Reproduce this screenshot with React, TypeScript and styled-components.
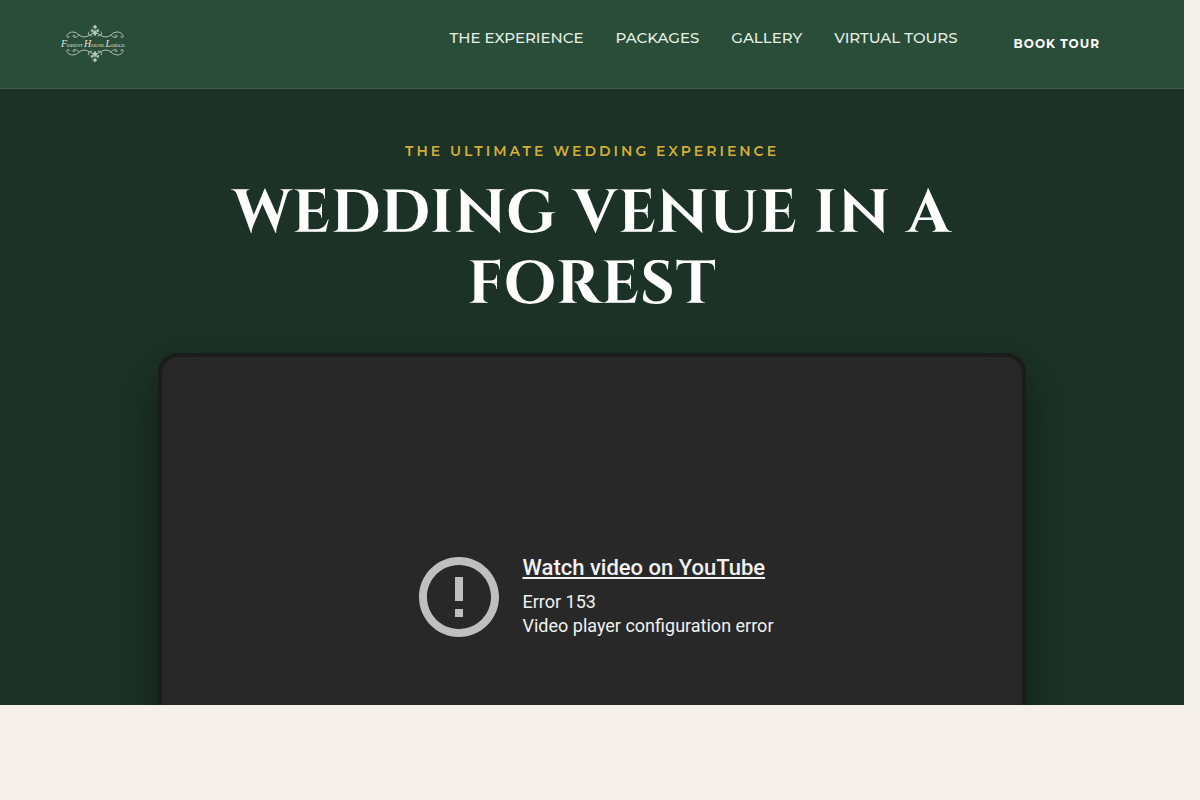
import React from "react";
import styled, { createGlobalStyle } from "styled-components";

const sans = `Montserrat, Inter, "Open Sans", sans-serif`;
const serif = `Cinzel, "Liberation Serif", serif`;

const GlobalStyle = createGlobalStyle`
  * { box-sizing: border-box; }
  body {
    margin: 0;
    background: #f5f0ea;
    font-family: ${sans};
  }
`;

const Page = styled.div`
  margin-right: 16px;
`;

const Header = styled.header`
  display: flex;
  align-items: center;
  justify-content: space-between;
  min-height: 89px;
  padding: 0 60px 0 59px;
  background: #2a4d3a;
  border-bottom: 1px solid #47604e;
`;

const LogoLink = styled.a`
  display: block;
  line-height: 0;
`;

const Nav = styled.nav`
  display: flex;
  align-items: center;
  gap: 32px;
`;

const NavLink = styled.a`
  padding-bottom: 12px;
  color: #e4f0e4;
  font-size: 15px;
  font-weight: 500;
  line-height: 20px;
  text-decoration: none;
  text-transform: uppercase;
`;

const BookButton = styled.button`
  padding: 12px 24px;
  border: 0;
  border-radius: 30px;
  background: transparent;
  color: #fff;
  font-family: ${sans};
  font-size: 12px;
  font-weight: 700;
  line-height: 20px;
  letter-spacing: 1px;
  text-transform: uppercase;
  cursor: pointer;
`;

const Hero = styled.section`
  display: flex;
  flex-direction: column;
  align-items: center;
  height: calc(100vh - 184px);
  padding: 52px 24px 0;
  overflow: hidden;
  background: #1c3226;
`;

const Eyebrow = styled.p`
  margin: 0;
  color: #d4af37;
  font-size: 14px;
  font-weight: 600;
  line-height: 20px;
  letter-spacing: 3px;
  text-transform: uppercase;
`;

const Title = styled.h1`
  max-width: 800px;
  margin: 17px 0 33px;
  color: #fff;
  font-family: ${serif};
  font-size: 60px;
  font-weight: 700;
  line-height: 71px;
  letter-spacing: 1px;
  text-align: center;
  text-transform: uppercase;
`;

const Player = styled.div`
  display: flex;
  flex-shrink: 0;
  align-items: center;
  justify-content: center;
  gap: 16px;
  width: 100%;
  max-width: 868px;
  aspect-ratio: 16 / 9;
  border: 4px solid #1b1c1b;
  border-radius: 20px;
  background: #282828;
  box-shadow: 0 20px 50px rgba(0, 0, 0, 0.4);
  color: #f1f1f1;
  font-family: Roboto, sans-serif;
`;

const Message = styled.div`
  font-size: 18px;
  line-height: 24px;
`;

const WatchLink = styled.a`
  display: block;
  margin-bottom: 10px;
  color: inherit;
  font-size: 22px;
  font-weight: 500;
`;

const MessageLine = styled.p`
  margin: 0;
`;

const flourish = (
  <>
    <path d="M35 9c-3 0-5 4-10 4S19 8 14 8c-4 0-7 3-6 5 1 1 3 0 2-1" />
    <path d="M20 11c-2 3-6 3-6 1 0-1 2-1 2 0" />
    <path d="M33 12c-3 0-5-3-3-4" />
  </>
);

const halfOrnament = (
  <>
    {flourish}
    <g transform="translate(72 0) scale(-1 1)">{flourish}</g>
    <path d="M36 1l2 2-2 2-2-2zM33 5l2 2-2 1-1-1zM39 5l1 2-1 1-2-1zM36 6l2 3-2 3-2-3z" fill="#b9cabb" strokeWidth="0.4" />
  </>
);

function Logo() {
  return (
    <svg width="72" height="40" viewBox="0 0 72 40" role="img" aria-label="Forest House Lodge">
      <g fill="none" stroke="#b9cabb" strokeWidth="0.9" strokeLinecap="round">
        {halfOrnament}
        <g transform="translate(0 39) scale(1 -1)">{halfOrnament}</g>
      </g>
      <text
        x="34"
        y="23"
        fill="#dfe8de"
        fontFamily="'Liberation Serif', serif"
        fontSize="5"
        textAnchor="middle"
      >
        <tspan fontSize="10" fontStyle="italic">F</tspan>OREST{" "}
        <tspan fontSize="10" fontStyle="italic">H</tspan>OUSE{" "}
        <tspan fontSize="10" fontStyle="italic">L</tspan>ODGE
      </text>
    </svg>
  );
}

function ErrorIcon() {
  return (
    <svg width="96" height="96" viewBox="0 0 24 24" fill="#bfbfbf" aria-hidden="true">
      <path d="M11 15h2v2h-2zm0-8h2v6h-2zm.99-5C6.47 2 2 6.48 2 12s4.47 10 9.99 10C17.52 22 22 17.52 22 12S17.52 2 11.99 2zM12 20c-4.42 0-8-3.58-8-8s3.58-8 8-8 8 3.58 8 8-3.58 8-8 8z" />
    </svg>
  );
}

const links = ["The Experience", "Packages", "Gallery", "Virtual Tours"];

export default function App() {
  return (
    <>
      <GlobalStyle />
      <Page>
        <Header>
          <LogoLink href="#home">
            <Logo />
          </LogoLink>
          <Nav>
            {links.map((label) => (
              <NavLink key={label} href={`#${label.toLowerCase().replace(" ", "-")}`}>
                {label}
              </NavLink>
            ))}
            <BookButton type="button">Book Tour</BookButton>
          </Nav>
        </Header>
        <main>
          <Hero>
            <Eyebrow>The Ultimate Wedding Experience</Eyebrow>
            <Title>Wedding Venue in a Forest</Title>
            <Player>
              <ErrorIcon />
              <Message>
                <WatchLink href="#watch">Watch video on YouTube</WatchLink>
                <MessageLine>Error 153</MessageLine>
                <MessageLine>Video player configuration error</MessageLine>
              </Message>
            </Player>
          </Hero>
        </main>
      </Page>
    </>
  );
}
